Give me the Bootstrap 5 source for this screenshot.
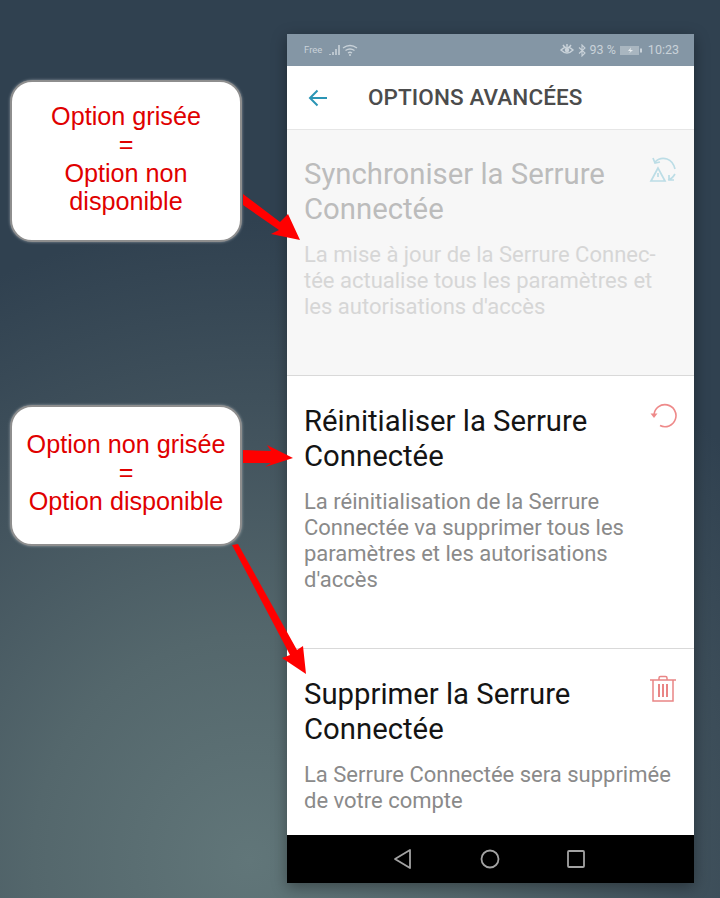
<!DOCTYPE html>
<html lang="fr">
<head>
  <meta charset="UTF-8">
  <title>Options avancées</title>
  <meta name="viewport" content="width=device-width, initial-scale=1">
  <link href="https://cdn.jsdelivr.net/npm/bootstrap@5.3.2/dist/css/bootstrap.min.css" rel="stylesheet">
  <style>
    html, body { height: 898px; overflow: hidden; }
    body {
      position: relative;
      background: radial-gradient(ellipse 620px 640px at 250px 860px, #617679 0%, #54676c 35%, #43545e 65%, #304150 100%);
      font-family: Roboto, sans-serif;
    }
    .scene { height: 898px; }
    .side-col { width: 287px; flex: none; padding: 80px 0 0 10px; }
    .note-box {
      width: 232px;
      background: #fff;
      border: 2px solid #8e8e8e;
      border-radius: 22px;
      box-shadow: 0 0 3px rgba(255,255,255,.45);
      color: #e00000;
      font-family: "Liberation Sans", Arial, sans-serif;
      font-size: 25.2px;
      line-height: 28.4px;
      text-align: center;
    }
    .note-a { height: 162px; padding-top: 20px; }
    .note-b { height: 141px; margin-top: 163px; padding-top: 23px; }
    .phone {
      width: 407px;
      margin-top: 34px;
      height: 849px;
      box-shadow: 0 4px 14px rgba(0,0,0,.35);
    }
    .status-row {
      height: 32px;
      background: #8496a5;
      color: #c9d2d9;
      font-size: 12.5px;
      padding: 0 15px 0 17px;
    }
    .status-row .free-txt { font-size: 9.5px; margin-right: 7px; }
    .status-row .clock-txt { font-size: 12.5px; margin-left: 2px; }
    .status-row .eye-ico { margin-right: 0; }
    .head-row {
      height: 64px;
      background: #fff;
      border-bottom: 1px solid #e6e6e6;
      box-shadow: 0 1px 2px rgba(0,0,0,.06);
      padding-left: 21px;
    }
    .head-title {
      margin: 0 0 0 40px;
      color: #4c4c4c;
      font-size: 22.5px;
      font-weight: 500;
      letter-spacing: .1px;
    }
    .opt-block { padding: 28px 17px 0 17px; border-bottom: 1px solid #d9d9d9; background: #fff; }
    .opt-one { height: 246px; background: #f7f7f7; padding-top: 27px; }
    .opt-two { height: 273px; }
    .opt-three { height: 186px; border-bottom: 0; }
    .opt-text { width: 330px; flex: none; }
    .opt-title { margin: 0; font-size: 29.3px; line-height: 34.5px; font-weight: 400; color: #141414; }
    .opt-desc { margin: 16px 0 0; font-size: 22px; line-height: 26px; color: #8a8a8a; white-space: nowrap; }
    .opt-one .opt-title { color: #bcbcbc; }
    .opt-one .opt-desc { color: #d6d6d6; }
    .opt-ico { flex: none; margin-top: -2px; }
    .nav-row { height: 48px; background: #000; gap: 67px; padding-right: 3px; }
    .arrows { position: absolute; left: 0; top: 0; pointer-events: none; }
  </style>
</head>
<body>
  <div class="scene d-flex">
    <div class="side-col">
      <div class="note-box note-a">Option grisée<br>=<br>Option non disponible</div>
      <div class="note-box note-b">Option non grisée<br>=<br>Option disponible</div>
    </div>

    <div class="phone d-flex flex-column">
      <div class="status-row d-flex align-items-center justify-content-between">
        <div class="d-flex align-items-center">
          <span class="free-txt">Free</span>
          <svg width="30" height="14" viewBox="0 0 30 14" fill="none" stroke="#c9d2d9">
            <path d="M1 12v-1M4 12v-3M7 12v-6M10 12V2" stroke-width="1.6"/>
            <path d="M14 5q7-5 14 0M16.500 7.500q4.500-3 9 0M19 10q2-1.500 4 0" stroke-width="1.300"/>
            <circle cx="21" cy="12" r="1" fill="#c9d2d9" stroke="none"/>
          </svg>
        </div>
        <div class="d-flex align-items-center">
          <svg width="14" height="12" viewBox="0 0 14 12" fill="none" stroke="#c9d2d9" stroke-width="1.500">
            <path d="M1 6q6-6 12 0q-6 6-12 0zM3 1l1.500 2M11 1L9.500 3M7 0v2"/>
            <circle cx="7" cy="6" r="1.500" fill="#c9d2d9"/>
          </svg>
          <svg class="mx-1" width="8" height="13" viewBox="0 0 8 13" fill="none" stroke="#c9d2d9" stroke-width="1.100">
            <path d="M1 3.500l6 5.500-3 3V1l3 3-6 5.500"/>
          </svg>
          <span>93 %</span>
          <svg class="mx-1" width="22" height="11" viewBox="0 0 22 11">
            <rect x="0" y="1" width="19" height="9" fill="#a9b6c0"/>
            <rect x="20" y="3.500" width="2" height="4" fill="#c9d2d9"/>
            <path d="M11 2.500L8 6h2.500L9 8.500 13 5h-2.500z" fill="#e4e9ec"/>
          </svg>
          <span class="clock-txt">10:23</span>
        </div>
      </div>

      <div class="head-row d-flex align-items-center">
        <svg width="20" height="18" viewBox="0 0 20 18" fill="none" stroke="#2b95b5" stroke-width="2">
          <path d="M19 9H2M9.500 1.500L2 9l7.500 7.500"/>
        </svg>
        <h1 class="head-title">OPTIONS AVANCÉES</h1>
      </div>

      <div class="opt-block opt-one d-flex justify-content-between">
        <div class="opt-text">
          <h2 class="opt-title">Synchroniser la Serrure Connectée</h2>
          <p class="opt-desc">La mise à jour de la Serrure Connec-<br>tée actualise tous les paramètres et<br>les autorisations d'accès</p>
        </div>
        <svg class="opt-ico" width="28" height="28" viewBox="0 0 28 28" fill="none" stroke="#bcdde6" stroke-width="1.700">
          <path d="M6 7q5-5 12-3 6 2 8 10M4 3l2 5 5-1"/>
          <path d="M9 13L2 26h14zM9 18v4"/>
          <path d="M19 25q4-1 7-6M20 20v5h5"/>
        </svg>
      </div>

      <div class="opt-block opt-two d-flex justify-content-between">
        <div class="opt-text">
          <h2 class="opt-title">Réinitialiser la Serrure Connectée</h2>
          <p class="opt-desc">La réinitialisation de la Serrure<br>Connectée va supprimer tous les<br>paramètres et les autorisations<br>d'accès</p>
        </div>
        <svg class="opt-ico" width="28" height="28" viewBox="0 0 28 28" fill="none" stroke="#ee8a8a" stroke-width="1.600">
          <path d="M5 13a11 11 0 1 1 6 10.500"/>
          <path d="M1.500 11.500h7L5 16z" fill="#ee8a8a" stroke="none"/>
        </svg>
      </div>

      <div class="opt-block opt-three d-flex justify-content-between">
        <div class="opt-text">
          <h2 class="opt-title">Supprimer la Serrure Connectée</h2>
          <p class="opt-desc">La Serrure Connectée sera supprimée<br>de votre compte</p>
        </div>
        <svg class="opt-ico" width="28" height="28" viewBox="0 0 28 28" fill="none" stroke="#e98585" stroke-width="1.500">
          <path d="M1 5h26M10 5V3q0-1.500 1.500-1.500h5Q18 1.500 18 3v2M4 5v21h20V5"/>
          <path d="M10 9v13M14 9v13M18 9v13" stroke-width="2"/>
        </svg>
      </div>

      <div class="nav-row d-flex align-items-center justify-content-center">
        <svg width="20" height="22" viewBox="0 0 20 22" fill="none" stroke="#a3a3a3" stroke-width="1.800" stroke-linejoin="round">
          <path d="M17 2v18L2 11z"/>
        </svg>
        <svg width="20" height="20" viewBox="0 0 20 20" fill="none" stroke="#a3a3a3" stroke-width="1.800">
          <circle cx="10" cy="10" r="8.500"/>
        </svg>
        <svg width="18" height="18" viewBox="0 0 18 18" fill="none" stroke="#a3a3a3" stroke-width="1.800">
          <rect x="1" y="1" width="16" height="16" rx="1"/>
        </svg>
      </div>
    </div>
  </div>

  <!-- fleches rouges par dessus les encadres et le telephone -->
  <svg class="arrows" width="720" height="898" viewBox="0 0 720 898" fill="#ff0000">
    <path d="M243 194L280 222L288 214L300 240L271 234L279 230L243 205z"/>
    <path d="M243 450L271 451L267 445L293 458L265 467L271 463L243 463z"/>
    <path d="M232 545L238 544L297 650L303 646L306 674L282 658L290 655z"/>
  </svg>
</body>
</html>
